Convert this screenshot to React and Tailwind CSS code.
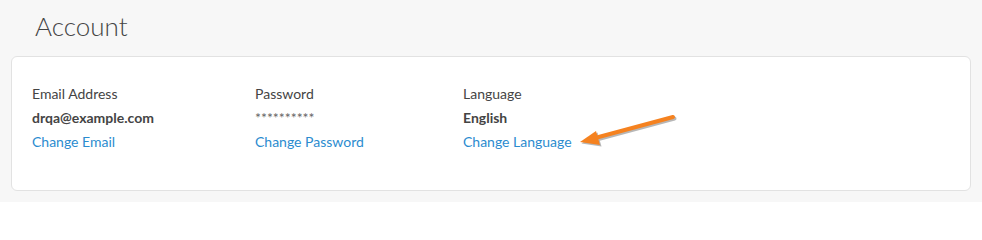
export default function App() {
  return (
    <div className="min-h-[202px] w-[982px] bg-[#f7f7f7] font-['Lato','Liberation_Sans',sans-serif] text-[#444]">
      <h1 className="pl-[35px] pt-[9px] h-[56px] text-[26px] font-light leading-[34px] text-[#444]">Account</h1>

      <div className="relative mx-[11px] w-[960px] h-[135px] rounded-[6px] border border-[#e2e2e2] bg-white">
        <div className="flex pl-[20px] pt-[25px] text-[14px] leading-[24px]">
          <div className="w-[223px]">
            <div>Email Address</div>
            <div className="font-bold">drqa@example.com</div>
            <a className="text-[#2b8ccf]">Change Email</a>
          </div>
          <div className="w-[208px]">
            <div>Password</div>
            <div className="text-[#666]">**********</div>
            <a className="text-[#2b8ccf]">Change Password</a>
          </div>
          <div>
            <div>Language</div>
            <div className="font-bold">English</div>
            <a className="text-[#2b8ccf]">Change Language</a>
          </div>
        </div>

        {/* Arrow annotation */}
        <svg className="absolute left-[557px] top-[52px]" width="112" height="42" viewBox="0 0 112 42">
          <g transform="translate(1.5 1.5)" opacity="0.35">
            <line x1="104" y1="8" x2="26" y2="29" stroke="#333" strokeWidth="4" strokeLinecap="round" />
            <polygon points="11,33 27,22 31,36" fill="#333" />
          </g>
          <line x1="104" y1="8" x2="26" y2="29" stroke="#f58220" strokeWidth="4" strokeLinecap="round" />
          <polygon points="11,33 27,22 31,36" fill="#f58220" />
        </svg>
      </div>
    </div>
  )
}
